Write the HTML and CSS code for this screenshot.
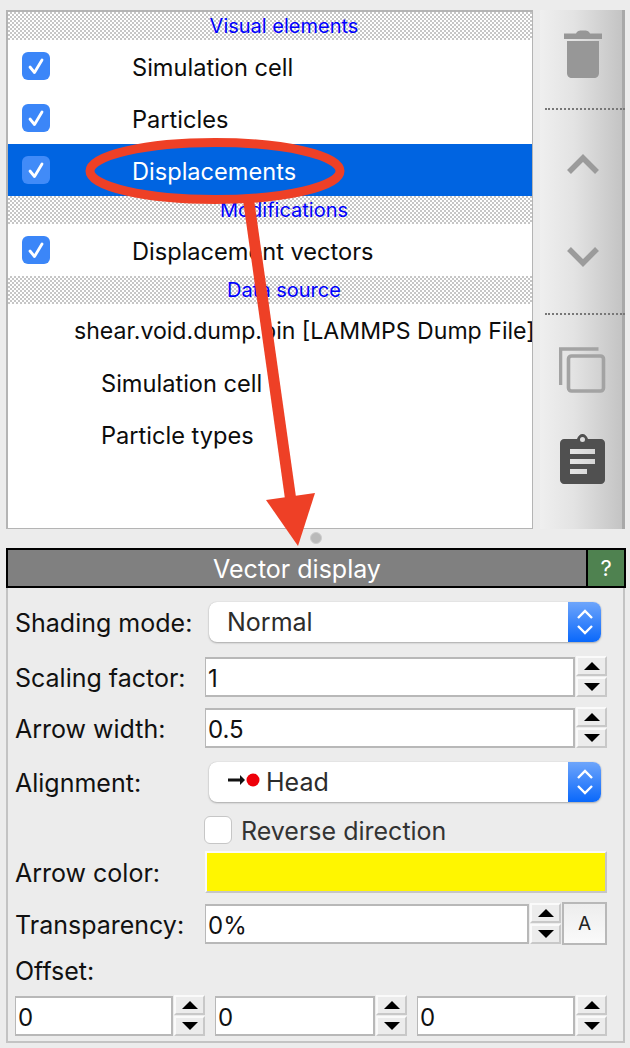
FILE: index.html
```html
<!DOCTYPE html>
<html lang="en">
<head>
    <meta charset="UTF-8">
    <meta name="viewport" content="width=device-width, initial-scale=1.0">
    <title>Vector display</title>
    <link rel="stylesheet" href="styles.css">
</head>
<body>
    <div class="top">
        <div class="list">
            <div class="group">Visual elements</div>
            <div class="item"><span class="check"><svg viewBox="0 0 28 28"><path d="M8 15l4.500 5.500L20 8"/></svg></span><span class="name">Simulation cell</span></div>
            <div class="item"><span class="check"><svg viewBox="0 0 28 28"><path d="M8 15l4.500 5.500L20 8"/></svg></span><span class="name">Particles</span></div>
            <div class="item selected"><span class="check"><svg viewBox="0 0 28 28"><path d="M8 15l4.500 5.500L20 8"/></svg></span><span class="name">Displacements</span></div>
            <div class="group">Modifications</div>
            <div class="item"><span class="check"><svg viewBox="0 0 28 28"><path d="M8 15l4.500 5.500L20 8"/></svg></span><span class="name">Displacement vectors</span></div>
            <div class="group">Data source</div>
            <div class="item source"><span class="name">shear.void.dump.bin [LAMMPS Dump File]</span></div>
            <div class="item child"><span class="name">Simulation cell</span></div>
            <div class="item child"><span class="name">Particle types</span></div>
        </div>

        <div class="toolbar">
            <div class="tool tool-trash">
                <svg width="38" height="48" viewBox="0 0 38 48"><path class="muted" d="M0 3.500h12C13 1 15 .5 19 .5S25 1 26 3.500h12V9H0zM3 11h32v32c0 3-2 5-5 5H8c-3 0-5-2-5-5z"/></svg>
            </div>
            <div class="sep"></div>
            <div class="tool tool-up">
                <svg width="34" height="22" viewBox="0 0 34 22"><path class="chevron" d="M3 18L17 4l14 14"/></svg>
            </div>
            <div class="tool tool-down">
                <svg width="34" height="22" viewBox="0 0 34 22"><path class="chevron" d="M3 4l14 14L31 4"/></svg>
            </div>
            <div class="sep"></div>
            <div class="tool tool-copy">
                <svg width="47" height="46" viewBox="0 0 47 46"><path class="copy" d="M1.500 38V2h38M9.500 12a3 3 0 0 1 3-3h29a3 3 0 0 1 3 3v29a3 3 0 0 1-3 3h-29a3 3 0 0 1-3-3z"/></svg>
            </div>
            <div class="tool tool-paste">
                <svg width="45" height="50" viewBox="0 0 45 50"><path fill="#505050" fill-rule="evenodd" d="M4 5h13c1-3 3-5 5.500-5S27 2 28 5h13c2 0 4 2 4 4v37c0 2-2 4-4 4H4c-2 0-4-2-4-4V9c0-2 2-4 4-4zM22.500 3a2.500 2.500 0 1 0 0 5 2.500 2.500 0 0 0 0-5zM10 15v5h25v-5zM10 25v5h25v-5zM10 35v5h17v-5z"/></svg>
            </div>
        </div>
    </div>

    <div class="splitter"><span class="handle"></span></div>

    <div class="titlebar">
        <div class="title">Vector display</div>
        <div class="help">?</div>
    </div>

    <div class="panel">
        <div class="row row-combo">
            <label class="lbl">Shading mode:</label>
            <div class="combo">
                <span class="combo-text">Normal</span>
                <span class="combo-btn"><svg width="20" height="30" viewBox="0 0 20 30"><path d="M3 11l7-7 7 7M3 19l7 7 7-7"/></svg></span>
            </div>
        </div>
        <div class="row row-spin">
            <label class="lbl">Scaling factor:</label>
            <input class="field" type="text" value="1">
            <div class="spin"><span class="up"></span><span class="down"></span></div>
        </div>
        <div class="row row-spin row-width">
            <label class="lbl">Arrow width:</label>
            <input class="field" type="text" value="0.5">
            <div class="spin"><span class="up"></span><span class="down"></span></div>
        </div>
        <div class="row row-combo row-align">
            <label class="lbl">Alignment:</label>
            <div class="combo">
                <span class="combo-icon"><svg width="33" height="16" viewBox="0 0 33 16"><path d="M1 6.500h14v3H1z" fill="#111"/><path d="M13 3v10l5-5z" fill="#111"/><circle cx="26" cy="8" r="6.500" fill="#ee0009"/></svg></span>
                <span class="combo-text">Head</span>
                <span class="combo-btn"><svg width="20" height="30" viewBox="0 0 20 30"><path d="M3 11l7-7 7 7M3 19l7 7 7-7"/></svg></span>
            </div>
        </div>
        <div class="row-check">
            <span class="box"></span>
            <span class="box-label">Reverse direction</span>
        </div>
        <div class="row row-color">
            <label class="lbl">Arrow color:</label>
            <div class="swatch"></div>
        </div>
        <div class="row row-transp">
            <label class="lbl">Transparency:</label>
            <input class="field" type="text" value="0%">
            <div class="spin"><span class="up"></span><span class="down"></span></div>
            <div class="auto">A</div>
        </div>
        <div class="offset-label">Offset:</div>
        <div class="row-offset">
            <input class="field" type="text" value="0">
            <div class="spin"><span class="up"></span><span class="down"></span></div>
            <input class="field" type="text" value="0">
            <div class="spin"><span class="up"></span><span class="down"></span></div>
            <input class="field" type="text" value="0">
            <div class="spin"><span class="up"></span><span class="down"></span></div>
        </div>
    </div>

    <!-- red annotation drawn over the screenshot -->
    <svg class="markup" width="630" height="1048" viewBox="0 0 630 1048">
        <path d="M243 200l11-1 42 298-11 2z" fill="#ee4026"/>
        <path d="M266 500l49-7-17 53z" fill="#ee4026"/>
        <ellipse cx="215" cy="171" rx="125" ry="28.500" fill="none" stroke="#ee4026" stroke-width="9"/>
    </svg>
</body>
</html>
```

FILE: styles.css
```css
html, body { height: 1048px; overflow: hidden; }
body { margin: 0; background-color: #ececec; font-family: Inter, "Noto Sans", sans-serif; font-size: 25px; color: #111; position: relative; }

.top { display: flex; padding: 10px 5px 0 6px; height: 519px; }

.list { width: 527px; box-sizing: border-box; background-color: #fff; border: 1px solid #b4b4b4; border-left-width: 2px; border-top-width: 2px; overflow: hidden; font-size: 23.600px; }
.group { height: 28px; line-height: 29px; box-sizing: border-box; padding-left: 28px; text-align: center; color: #0000ff; font-size: 20px; background-color: #fff; background-image: repeating-conic-gradient(#c6c6c6 0 25%, #fff 0 50%); background-size: 4px 4px; }
.item { height: 52px; display: flex; align-items: center; white-space: nowrap; color: #0c0c0c; }
.item .check { margin-left: 14px; width: 28px; height: 28px; border-radius: 6px; background-color: #3b86f8; flex: none; }
.check svg { width: 28px; height: 28px; display: block; }
.check path { fill: none; stroke: #fff; stroke-width: 2.800; stroke-linecap: round; stroke-linejoin: round; }
.name { padding-top: 2px; }
.item .check + .name { margin-left: 82px; }
.selected { background-color: #0064e1; color: #fff; }
.selected .check { background-color: #418bf8; }
.source { padding-left: 66px; font-size: 23.100px; }
.child { padding-left: 93px; }

.toolbar { margin-left: 7px; width: 85px; background: linear-gradient(to right, #efefef, #e3e3e3 40%, #c4c4c4 96%, #a8a8a8 97%); }
.tool { display: flex; justify-content: center; align-items: center; box-sizing: border-box; }
.sep { height: 0; margin-left: 5px; border-top: 2px dotted #777; }
.tool-trash { height: 98px; padding-bottom: 10px; padding-left: 1px; }
.tool-up { height: 110px; }
.tool-down { height: 93px; padding-bottom: 21px; }
.tool-copy { height: 110px; padding-right: 1px; }
.tool-paste { height: 68px; padding-right: 1px; }
.muted { fill: #979797; }
.chevron { fill: none; stroke: #9b9b9b; stroke-width: 5.500; }
.copy { fill: none; stroke: #a3a3a3; stroke-width: 3.600; }

.splitter { height: 19px; display: flex; justify-content: center; align-items: flex-start; padding: 3px 0 0 2px; box-sizing: border-box; }
.handle { width: 12px; height: 12px; box-sizing: border-box; border-radius: 50%; background-color: #bababa; border: 1px solid #cdcdcd; }

.titlebar { margin: 0 4px 0 6px; height: 40px; box-sizing: border-box; border: 2px solid #000; display: flex; }
.title { flex: 1; background-color: #808080; color: #fff; text-align: center; line-height: 38px; }
.help { width: 36px; border-left: 2px solid #000; background-color: #4f8250; color: #fff; text-align: center; font-size: 22px; line-height: 37px; }

.panel { margin: 0 5px 0 6px; height: 455px; box-sizing: border-box; border: 2px solid #c3c3c3; border-top: none; padding: 14px 16px 0 7px; }
.row { display: flex; align-items: center; }
.lbl { width: 190px; flex: none; padding-top: 2px; }
.field { box-sizing: border-box; width: 370px; height: 40px; margin: 0; padding: 2px 2px 0; border: 1px solid #b8b8b8; border-width: 2px 2px 2px 1px; background-color: #fff; font: inherit; font-size: 24px; color: #111; outline: none; flex: none; align-self: flex-end; }

.row-combo .lbl { width: 194px; }
.combo { width: 392px; height: 40px; box-sizing: border-box; display: flex; align-items: center; border-radius: 8px; background-color: #fff; box-shadow: 0 1px 2px #a9a9a9, 0 0 1px #bdbdbd; overflow: hidden; }
.combo-text { flex: 1; padding-left: 18px; color: #2c2c2c; }
.combo-icon { padding-left: 18px; display: flex; margin-bottom: 4px; }
.combo-icon + .combo-text { padding-left: 6px; }
.combo-btn { width: 33px; height: 40px; display: flex; align-items: center; justify-content: center; background: linear-gradient(#6ea5fb, #0a68fb); }
.combo-btn path { fill: none; stroke: #fff; stroke-width: 2.400; }

.row-spin { margin-top: 14px; }
.row-width { margin-top: 10px; }
.row-align { margin-top: 14px; }

.spin { display: flex; flex-direction: column; width: 31px; height: 41px; margin-left: 1px; flex: none; gap: 1px; }
.spin span { flex: 1; box-sizing: border-box; background-color: #ececec; border: 2px solid; border-color: #fafafa #c8c8c8 #c8c8c8 #fafafa; display: flex; justify-content: center; align-items: center; }
.up::before { content: ""; border: 8.500px solid transparent; border-top: none; border-bottom: 8px solid #000; }
.down::before { content: ""; border: 8.500px solid transparent; border-bottom: none; border-top: 8px solid #000; }

.row-check { display: flex; align-items: center; height: 28px; margin: 14px 0 0 189px; }
.box { width: 28px; height: 28px; box-sizing: border-box; border-radius: 6px; background-color: #fff; border: 1px solid #c6c6c6; }
.box-label { margin-left: 9px; color: #333; padding-top: 2px; }

.row-color { margin-top: 7px; }
.swatch { width: 403px; height: 42px; box-sizing: border-box; background-color: #fff600; border: 2px solid; border-color: #fafafa #c6c6c6 #c6c6c6 #fafafa; }

.row-transp { margin-top: 9px; }
.row-transp .field { width: 324px; margin-bottom: 1px; }
.row-transp .spin { margin-bottom: 1px; }
.auto { width: 46px; height: 43px; box-sizing: border-box; margin-left: 1px; border: 2px solid #b8b8b8; background: linear-gradient(#ededed, #fafafa); text-align: center; line-height: 39px; font-size: 19px; color: #222; }

.offset-label { height: 27px; line-height: 27px; margin-top: 13px; }
.row-offset { display: flex; margin-top: 10px; }
.row-offset .field { width: 158px; }
.row-offset .field:nth-child(3) { width: 160px; }
.row-offset .spin + .field { margin-left: 10px; }

.markup { position: absolute; left: 0; top: 0; pointer-events: none; }
```
